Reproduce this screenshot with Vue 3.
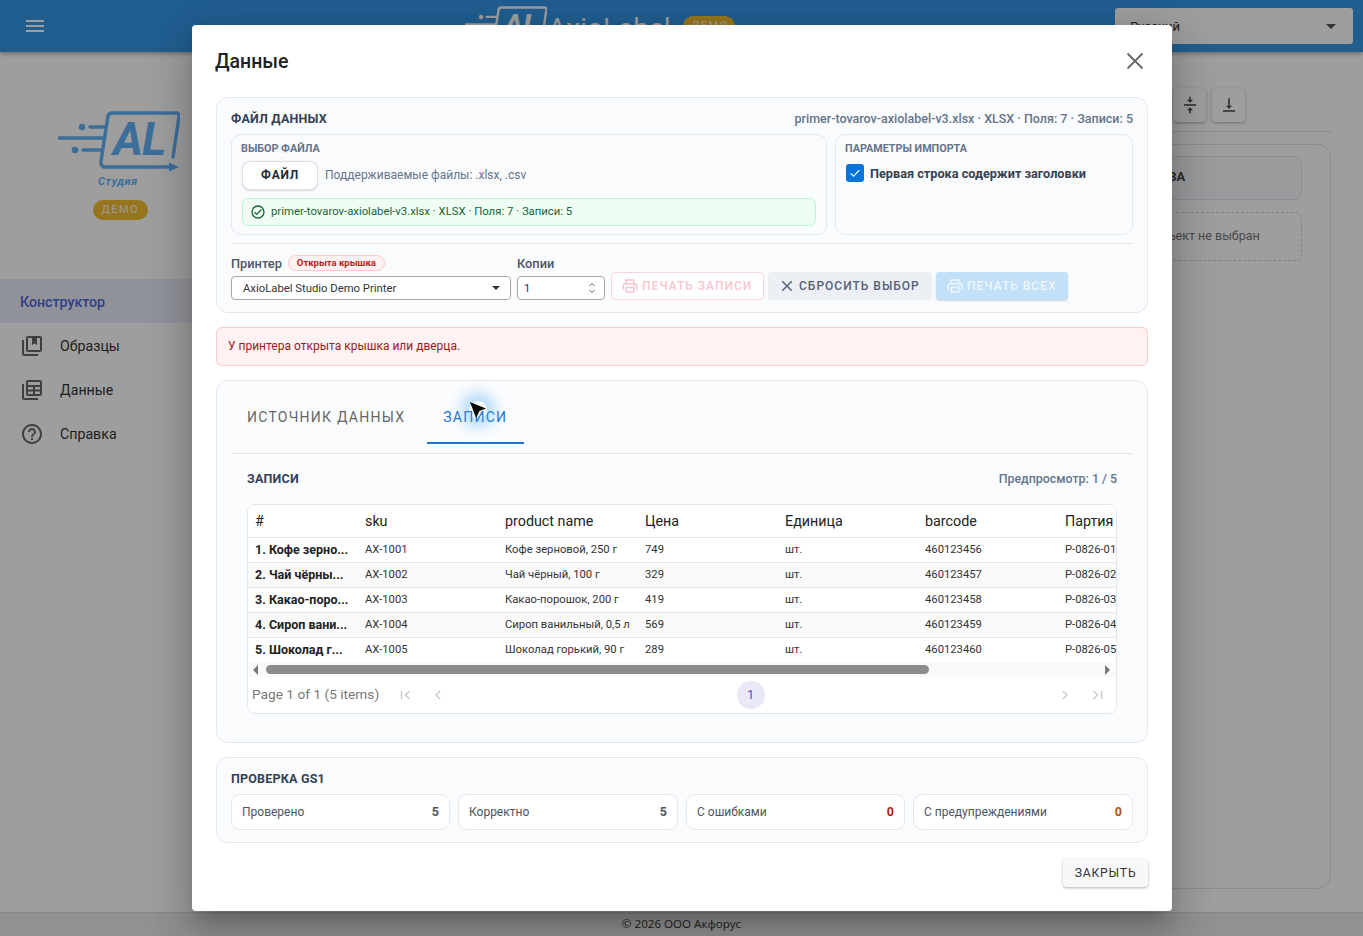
<template>
  <div class="app-shell">
    <!-- 顶栏 -->
    <header class="top-bar">
      <button class="menu-btn" aria-label="Меню">
        <svg width="24" height="24" viewBox="0 0 24 24"><path d="M3 6h18v2H3zm0 5h18v2H3zm0 5h18v2H3z" fill="#fff" /></svg>
      </button>
      <div class="top-logo">
        <svg class="top-logo-mark" width="82" height="50" viewBox="0 0 122 62">
          <use href="#al-mark" />
          <text x="57" y="45" class="brand-al">AL</text>
        </svg>
        <span class="top-logo-name">AxioLabel</span>
        <span class="demo-badge top-badge">ДЕМО</span>
      </div>
      <div class="lang-select">
        <span>Русский</span>
        <i class="caret"></i>
      </div>
    </header>

    <div class="page-body">
      <!-- 侧边栏 -->
      <aside class="side-nav">
        <div class="brand">
          <svg class="brand-mark" width="122" height="62" viewBox="0 0 122 62">
            <defs>
              <g id="al-mark" fill="none" stroke="currentColor" stroke-width="3.400" stroke-linecap="round">
                <path d="M45 56 H 113" stroke-linecap="butt" />
                <path d="M111 51.500 L121 56 L111 60.500 Z" fill="currentColor" stroke="none" />
                <path d="M50 5 Q51 2 54 2 H118 Q121.500 2 121 5.500 L115 46" />
                <path d="M50 5 L43 50 Q42.500 55 46 56" />
                <path d="M32 16 H47 M1 27 H45 M25 39 H44" />
                <circle cx="24" cy="16" r="1.600" fill="currentColor" />
                <circle cx="17" cy="39" r="1.600" fill="currentColor" />
              </g>
            </defs>
            <use href="#al-mark" />
            <text x="55" y="44" class="brand-al">AL</text>
          </svg>
          <div class="brand-sub">Студия</div>
          <span class="demo-badge">ДЕМО</span>
        </div>
        <nav class="nav-list">
          <a class="nav-item active"><span>Конструктор</span></a>
          <a v-for="item in navItems" :key="item.label" class="nav-item">
            <svg width="24" height="24" viewBox="0 0 24 24"><path :d="item.icon" fill="#666" fill-rule="evenodd" /></svg>
            <span>{{ item.label }}</span>
          </a>
        </nav>
      </aside>

      <!-- 主区域 -->
      <main class="workspace">
        <div class="tool-row">
          <button class="tool-btn">
            <svg width="18" height="18" viewBox="0 0 24 24"><path d="M8 19h3v4h2v-4h3l-4-4-4 4zm8-14h-3V1h-2v4H8l4 4 4-4zM4 11v2h16v-2H4z" fill="#444" /></svg>
          </button>
          <button class="tool-btn">
            <svg width="18" height="18" viewBox="0 0 24 24"><path d="M16 13h-3V3h-2v10H8l4 4 4-4zM4 19v2h16v-2H4z" fill="#444" /></svg>
          </button>
        </div>
        <div class="work-card">
          <div class="prop-col">
            <div class="prop-head">СВОЙСТВА</div>
            <div class="prop-empty">Объект не выбран</div>
          </div>
        </div>
      </main>
    </div>

    <footer class="page-foot">© 2026 ООО Акфорус</footer>

    <!-- 弹窗遮罩 -->
    <div class="scrim"></div>

    <div class="dialog">
      <div class="dialog-head">
        <h2>Данные</h2>
        <svg width="24" height="24" viewBox="0 0 24 24"><path d="M4.500 4.500 19.500 19.500M19.500 4.500 4.500 19.500" fill="none" stroke="#666" stroke-width="1.800" /></svg>
      </div>

      <div class="dialog-body">
        <!-- 文件区域 -->
        <section class="panel file-panel">
          <div class="panel-row">
            <h3 class="panel-title">ФАЙЛ ДАННЫХ</h3>
            <span class="file-meta">{{ fileSummary }}</span>
          </div>
          <div class="file-grid">
            <div class="sub-card">
              <h4>ВЫБОР ФАЙЛА</h4>
              <div class="file-pick">
                <button class="file-btn">ФАЙЛ</button>
                <span class="file-hint">Поддерживаемые файлы: .xlsx, .csv</span>
              </div>
              <div class="file-ok">
                <svg width="16" height="16" viewBox="0 0 24 24"><path d="M12 2a10 10 0 1 0 0 20 10 10 0 0 0 0-20zm0 18a8 8 0 1 1 0-16 8 8 0 0 1 0 16zm4.590-12.420L10 14.170l-2.590-2.580L6 13l4 4 8-8z" fill="#166534" /></svg>
                <span>{{ fileSummary }}</span>
              </div>
            </div>
            <div class="sub-card">
              <h4>ПАРАМЕТРЫ ИМПОРТА</h4>
              <label class="check-row">
                <span class="check-box">
                  <svg width="14" height="14" viewBox="0 0 24 24"><path d="M4.500 12.500 9.500 17.500 19.500 7" fill="none" stroke="#fff" stroke-width="2" /></svg>
                </span>
                Первая строка содержит заголовки
              </label>
            </div>
          </div>
          <div class="print-row">
            <div class="field printer-field">
              <div class="field-label">
                <span>Принтер</span>
                <span class="lid-chip">Открыта крышка</span>
              </div>
              <div class="input-box">
                <span>AxioLabel Studio Demo Printer</span>
                <i class="caret small"></i>
              </div>
            </div>
            <div class="field copies-field">
              <div class="field-label"><span>Копии</span></div>
              <div class="input-box">
                <span>1</span>
                <svg width="8" height="14" viewBox="0 0 8 14"><path d="M1.500 5 4 2.500 6.500 5M1.500 9 4 11.500 6.500 9" fill="none" stroke="#666" /></svg>
              </div>
            </div>
            <button class="act-btn act-record">
              <svg width="18" height="18" viewBox="0 0 24 24"><path :d="printerIcon" fill="currentColor" /></svg>
              ПЕЧАТЬ ЗАПИСИ
            </button>
            <button class="act-btn act-reset">
              <svg width="18" height="18" viewBox="0 0 24 24"><path d="M19 6.410 17.590 5 12 10.590 6.410 5 5 6.410 10.590 12 5 17.590 6.410 19 12 13.410 17.590 19 19 17.590 13.410 12z" fill="currentColor" /></svg>
              СБРОСИТЬ ВЫБОР
            </button>
            <button class="act-btn act-all">
              <svg width="18" height="18" viewBox="0 0 24 24"><path :d="printerIcon" fill="currentColor" /></svg>
              ПЕЧАТЬ ВСЕХ
            </button>
          </div>
        </section>

        <div class="alert">У принтера открыта крышка или дверца.</div>

        <!-- 标签页和记录表 -->
        <section class="panel tabs-panel">
          <div class="tabs">
            <div class="tab">ИСТОЧНИК ДАННЫХ</div>
            <div class="tab current">ЗАПИСИ</div>
          </div>
          <div class="records">
            <div class="records-head">
              <h3 class="panel-title">ЗАПИСИ</h3>
              <span class="preview-count">Предпросмотр: 1 / 5</span>
            </div>
            <div class="table-card">
              <div class="table-clip">
                <div class="t-row t-head">
                  <div v-for="col in columns" :key="col" class="t-cell">{{ col }}</div>
                </div>
                <div v-for="row in rows" :key="row.sku" class="t-row">
                  <div class="t-cell first">{{ row.title }}</div>
                  <div class="t-cell">{{ row.sku }}</div>
                  <div class="t-cell">{{ row.name }}</div>
                  <div class="t-cell">{{ row.price }}</div>
                  <div class="t-cell">шт.</div>
                  <div class="t-cell">{{ row.barcode }}</div>
                  <div class="t-cell">{{ row.lot }}</div>
                </div>
              </div>
              <div class="h-scroll">
                <i class="arrow-l"></i>
                <div class="h-track"><div class="h-thumb"></div></div>
                <i class="arrow-r"></i>
              </div>
              <div class="pager">
                <span class="pager-info">Page 1 of 1 (5 items)</span>
                <svg class="pg-first" width="16" height="16" viewBox="0 0 16 16"><path d="M3.500 4v8M11.500 4l-4 4 4 4" fill="none" stroke="#c4c7cc" stroke-width="1.300" /></svg>
                <svg class="pg-prev" width="16" height="16" viewBox="0 0 16 16"><path d="M10 4 6 8l4 4" fill="none" stroke="#c4c7cc" stroke-width="1.300" /></svg>
                <span class="pg-num">1</span>
                <svg class="pg-next" width="16" height="16" viewBox="0 0 16 16"><path d="m6 4 4 4-4 4" fill="none" stroke="#c4c7cc" stroke-width="1.300" /></svg>
                <svg class="pg-last" width="16" height="16" viewBox="0 0 16 16"><path d="M12.500 4v8M4.500 4l4 4-4 4" fill="none" stroke="#c4c7cc" stroke-width="1.300" /></svg>
              </div>
            </div>
          </div>
        </section>

        <!-- GS1 检查 -->
        <section class="panel gs1-panel">
          <h3 class="panel-title">ПРОВЕРКА GS1</h3>
          <div class="stat-grid">
            <div v-for="stat in stats" :key="stat.label" class="stat">
              <span>{{ stat.label }}</span>
              <b :class="stat.tone">{{ stat.value }}</b>
            </div>
          </div>
        </section>
      </div>

      <div class="dialog-foot">
        <button class="close-btn">ЗАКРЫТЬ</button>
      </div>

      <!-- 鼠标指针 -->
      <div class="cursor">
        <svg width="18" height="18" viewBox="0 0 18 18"><path d="M1 1 17 7.500 10.500 10 7 17z" fill="#0b0b0b" /></svg>
      </div>
    </div>
  </div>
</template>

<script setup>
const fileSummary = 'primer-tovarov-axiolabel-v3.xlsx · XLSX · Поля: 7 · Записи: 5'

const printerIcon = 'M19 8h-1V3H6v5H5c-1.660 0-3 1.340-3 3v6h4v4h12v-4h4v-6c0-1.660-1.340-3-3-3zM8 5h8v3H8V5zm8 14H8v-4h8v4zm2-2v-4H6v4H4v-6c0-.550.450-1 1-1h14c.550 0 1 .450 1 1v6h-2zm0-6.500a1 1 0 1 0 0 2 1 1 0 0 0 0-2z'

const navItems = [
  { label: 'Образцы', icon: 'M4 6H2v14c0 1.100.900 2 2 2h14v-2H4V6zm16-4H8c-1.100 0-2 .900-2 2v12c0 1.100.900 2 2 2h12c1.100 0 2-.900 2-2V4c0-1.100-.900-2-2-2zm0 14H8V4h4v7l2.500-1.500L17 11V4h3v12z' },
  { label: 'Данные', icon: 'M4 6H2v14c0 1.100.900 2 2 2h14v-2H4V6zM20 2H8c-1.100 0-2 .900-2 2v12c0 1.100.900 2 2 2h12c1.100 0 2-.900 2-2V4c0-1.100-.900-2-2-2zM8 4h12v3H8V4zm0 5h5v2.500H8V9zm7 0h5v2.500h-5V9zm-7 4.500h5V16H8v-2.500zm7 0h5V16h-5v-2.500z' },
  { label: 'Справка', icon: 'M11 18h2v-2h-2v2zm1-16C6.480 2 2 6.480 2 12s4.480 10 10 10 10-4.480 10-10S17.520 2 12 2zm0 18c-4.410 0-8-3.590-8-8s3.590-8 8-8 8 3.590 8 8-3.590 8-8 8zm0-14c-2.210 0-4 1.790-4 4h2c0-1.100.900-2 2-2s2 .900 2 2c0 2-3 1.750-3 5h2c0-2.250 3-2.500 3-5 0-2.210-1.790-4-4-4z' }
]

const columns = ['#', 'sku', 'product name', 'Цена', 'Единица', 'barcode', 'Партия']

const rows = [
  { title: '1. Кофе зерно...', sku: 'AX-1001', name: 'Кофе зерновой, 250 г', price: 749, barcode: '460123456', lot: 'P-0826-01' },
  { title: '2. Чай чёрны...', sku: 'AX-1002', name: 'Чай чёрный, 100 г', price: 329, barcode: '460123457', lot: 'P-0826-02' },
  { title: '3. Какао-поро...', sku: 'AX-1003', name: 'Какао-порошок, 200 г', price: 419, barcode: '460123458', lot: 'P-0826-03' },
  { title: '4. Сироп вани...', sku: 'AX-1004', name: 'Сироп ванильный, 0,5 л', price: 569, barcode: '460123459', lot: 'P-0826-04' },
  { title: '5. Шоколад г...', sku: 'AX-1005', name: 'Шоколад горький, 90 г', price: 289, barcode: '460123460', lot: 'P-0826-05' }
]

const stats = [
  { label: 'Проверено', value: 5, tone: '' },
  { label: 'Корректно', value: 5, tone: '' },
  { label: 'С ошибками', value: 0, tone: 'bad' },
  { label: 'С предупреждениями', value: 0, tone: 'warn' }
]
</script>

<style>
html, body {
  margin: 0;
  height: 100%;
  overflow: hidden;
  background: #fff;
}
</style>

<style scoped>
* {
  box-sizing: border-box;
}

.app-shell {
  position: relative;
  width: 1363px;
  height: 936px;
  overflow: hidden;
  display: flex;
  flex-direction: column;
  font-family: Roboto, "Noto Sans", sans-serif;
  color: #1f2937;
}

.top-bar {
  height: 52px;
  flex: none;
  background: #3598e8;
  box-shadow: 0 2px 4px rgba(0, 0, 0, 0.3);
  display: flex;
  align-items: center;
  padding: 0 10px 0 23px;
  position: relative;
  z-index: 1;
}

.menu-btn {
  padding: 0;
  border: 0;
  background: none;
  height: 24px;
}

.top-logo {
  margin-left: 418px;
  display: flex;
  align-items: center;
  width: 270px;
  height: 50px;
}

.top-logo-mark {
  flex: none;
  color: #fff;
  margin-top: 2px;
}

.top-logo-mark .brand-al {
  fill: #fff;
}

.top-logo-name {
  margin: 4px 0 0 1px;
  font-size: 28px;
  color: #fff;
}

.demo-badge {
  display: inline-block;
  background: #f3bd2f;
  color: #f7efd8;
  font-size: 11px;
  font-weight: 500;
  letter-spacing: 1.500px;
  line-height: 18px;
  height: 20px;
  padding: 1px 8.500px;
  border-radius: 10px;
}

.top-badge {
  margin-left: 12px;
  width: 52px;
  flex: none;
}

.lang-select {
  margin-left: auto;
  width: 238px;
  height: 36px;
  background: #fff;
  border-radius: 3px;
  display: flex;
  align-items: center;
  justify-content: space-between;
  padding: 0 17px 0 15px;
  font-size: 13px;
  color: #333;
}

.caret {
  width: 0;
  height: 0;
  border-left: 5px solid transparent;
  border-right: 5px solid transparent;
  border-top: 5px solid #555;
}

.caret.small {
  border-left-width: 4px;
  border-right-width: 4px;
  border-top-width: 4px;
  border-top-color: #333;
}

.page-body {
  flex: 1;
  display: flex;
  min-height: 0;
  background: #fff;
}

.side-nav {
  width: 238px;
  flex: none;
}

.brand {
  height: 227px;
  display: flex;
  flex-direction: column;
  align-items: flex-start;
  padding: 59px 0 0 58px;
}

.brand-mark {
  color: #61b2f8;
  flex: none;
}

.brand-al {
  font-family: Roboto, sans-serif;
  font-size: 46px;
  font-weight: 700;
  font-style: italic;
  letter-spacing: -1px;
  fill: #61b2f8;
}

.brand-sub {
  margin: 2px 0 0 40px;
  font-size: 11px;
  font-weight: 700;
  font-style: italic;
  letter-spacing: 0.600px;
  color: #61b2f8;
}

.brand .demo-badge {
  margin: 12px 0 0 35px;
}

.nav-item {
  display: flex;
  align-items: center;
  gap: 16px;
  height: 44px;
  padding: 2px 0 0 20px;
  font-size: 14.200px;
  color: #333;
}

.nav-item.active {
  background: #ebedf9;
  color: #5068d8;
  font-weight: 500;
}

.workspace {
  flex: 1;
  min-width: 0;
  padding: 36px 32px 23px 0;
  display: flex;
  flex-direction: column;
}

.tool-row {
  height: 44px;
  flex: none;
  display: flex;
  justify-content: flex-end;
  gap: 6px;
  padding: 0 86px 10px 0;
  border-bottom: 1px solid #e2e2e2;
}

.tool-btn {
  width: 33px;
  height: 34px;
  padding: 0;
  border: 0;
  border-radius: 4px;
  background: #fff;
  box-shadow: 0 1px 3px rgba(0, 0, 0, 0.3);
  display: flex;
  align-items: center;
  justify-content: center;
}

.work-card {
  flex: 1;
  margin-top: 12px;
  border: 1px solid #e2e2e2;
  border-radius: 14px;
  padding: 11px 28px 0 12px;
}

.prop-col {
  width: 192px;
  margin-left: auto;
}

.prop-head {
  height: 44px;
  line-height: 40px;
  border: 1px solid #dfe5ec;
  border-radius: 8px;
  background: #f8fbfe;
  padding-left: 6px;
  font-size: 13px;
  font-weight: 700;
  color: #444;
}

.prop-empty {
  margin-top: 12px;
  height: 49px;
  line-height: 45px;
  border: 1px dashed #cfd4da;
  border-radius: 6px;
  text-align: center;
  font-size: 12.500px;
  color: #777;
}

.page-foot {
  height: 24px;
  flex: none;
  border-top: 1px solid #dcdcdc;
  background: #eaeaea;
  text-align: center;
  font-family: "Open Sans", Roboto, sans-serif;
  font-size: 11.600px;
  line-height: 21px;
  color: #333;
}

.scrim {
  position: absolute;
  inset: 0;
  z-index: 5;
  background: rgba(0, 0, 0, 0.38);
}

.dialog {
  position: absolute;
  z-index: 6;
  left: 192px;
  top: 25px;
  width: 980px;
  height: 886px;
  background: #fff;
  border-radius: 4px;
  box-shadow: 0 11px 15px -7px rgba(0, 0, 0, 0.2), 0 24px 38px 3px rgba(0, 0, 0, 0.14), 0 9px 46px 8px rgba(0, 0, 0, 0.12);
  display: flex;
  flex-direction: column;
}

.dialog-head {
  height: 72px;
  flex: none;
  display: flex;
  align-items: center;
  justify-content: space-between;
  padding: 0 25px 0 23px;
}

.dialog-head h2 {
  margin: 0;
  font-size: 19.500px;
  font-weight: 500;
  color: #222;
}

.dialog-body {
  flex: 1;
  padding: 0 24px;
  display: flex;
  flex-direction: column;
  gap: 14px;
}

.panel {
  border: 1px solid #e2e8f0;
  border-radius: 12px;
  background: #fafbfd;
}

.panel-title {
  margin: 0;
  font-size: 12.500px;
  font-weight: 700;
  letter-spacing: 0.200px;
  color: #334155;
}

.file-panel {
  height: 216px;
  padding: 12px 14px 0;
}

.panel-row {
  display: flex;
  justify-content: space-between;
  align-items: center;
  height: 16px;
}

.file-meta {
  font-size: 12.500px;
  font-weight: 500;
  color: #64748b;
}

.file-grid {
  margin-top: 8px;
  display: grid;
  grid-template-columns: 596px 298px;
  gap: 8px;
  height: 101px;
}

.sub-card {
  border: 1px solid #e2e8f0;
  border-radius: 10px;
  background: #fafbfd;
  padding: 8px 10px 8px 9px;
}

.sub-card h4 {
  margin: 0;
  font-size: 10.800px;
  line-height: 12px;
  font-weight: 700;
  color: #64748b;
}

.file-pick {
  margin: 6px 0 0 1px;
  display: flex;
  align-items: center;
  gap: 7px;
}

.file-btn {
  width: 76px;
  height: 29px;
  padding: 0 0 1px;
  border: 1px solid #d9dfe8;
  border-radius: 8px;
  background: #fff;
  box-shadow: 0 1px 2px rgba(0, 0, 0, 0.12);
  font-family: inherit;
  font-size: 12px;
  font-weight: 700;
  letter-spacing: 0.800px;
  color: #1f2937;
}

.file-hint {
  margin-bottom: 2px;
  font-size: 12px;
  color: #64748b;
}

.file-ok {
  margin: 8px 0 0 1px;
  height: 28px;
  padding: 0 0 2px 7px;
  border: 1px solid #bbf7d0;
  border-radius: 6px;
  background: #f0fdf4;
  display: flex;
  align-items: center;
  gap: 5px;
  font-size: 11.340px;
  color: #166534;
}

.file-ok svg {
  margin-top: 2px;
}

.check-row {
  margin: 9px 0 0 1px;
  display: flex;
  align-items: center;
  gap: 6px;
  font-size: 12.700px;
  font-weight: 700;
  color: #374151;
}

.check-box {
  width: 18px;
  height: 18px;
  border-radius: 3px;
  background: #0a74da;
  display: flex;
  align-items: center;
  justify-content: center;
}

.print-row {
  margin-top: 8px;
  padding-top: 11px;
  border-top: 1px solid #e5e7eb;
  display: flex;
  align-items: flex-end;
  gap: 4px;
}

.field-label {
  display: flex;
  align-items: center;
  gap: 6px;
  height: 16px;
  font-size: 12.800px;
  font-weight: 500;
  color: #4b5563;
}

.lid-chip {
  height: 16px;
  line-height: 14px;
  padding: 0 8px;
  border: 1px solid #fecaca;
  border-radius: 8px;
  background: #fef2f2;
  font-size: 9.500px;
  font-weight: 700;
  color: #b91c1c;
}

.input-box {
  margin-top: 5px;
  height: 24px;
  border: 1px solid #a8a8a8;
  border-radius: 4px;
  background: #fff;
  display: flex;
  align-items: center;
  justify-content: space-between;
  padding: 0 10px 0 11px;
  font-size: 11.300px;
  color: #333;
}

.printer-field {
  width: 280px;
  margin-right: 2px;
}

.copies-field {
  width: 88px;
  margin-right: 2px;
}

.copies-field .input-box {
  padding: 0 8px 0 6px;
}

.act-btn {
  height: 28px;
  padding: 0 0 0 10px;
  border-radius: 4px;
  font-family: inherit;
  font-size: 12px;
  font-weight: 500;
  letter-spacing: 1px;
  display: flex;
  align-items: center;
  gap: 3px;
  white-space: nowrap;
}

.act-record {
  width: 153px;
  padding-left: 9px;
  border: 1px solid #fbd5dc;
  background: #fff;
  color: #f9c6d0;
}

.act-reset {
  width: 164px;
  border: 0;
  background: #eceff4;
  color: #56627a;
}

.act-all {
  width: 132px;
  border: 0;
  background: #c2e0f7;
  color: #edf6fd;
  box-shadow: 0 1px 2px rgba(0, 0, 0, 0.15);
}

.alert {
  height: 39px;
  line-height: 37px;
  flex: none;
  border: 1px solid #fecaca;
  border-radius: 6px;
  background: #fef2f2;
  padding-left: 11px;
  font-size: 12px;
  color: #991b1b;
}

.tabs-panel {
  height: 363px;
  flex: none;
  padding: 0 14px;
  background: #fbfcfe;
}

.tabs {
  height: 73px;
  border-bottom: 1px solid #e5e7eb;
  display: flex;
  padding-top: 13px;
}

.tab {
  height: 50px;
  padding: 0 16px;
  line-height: 46px;
  font-size: 14px;
  letter-spacing: 1.250px;
  color: #666;
}

.tab + .tab {
  margin-left: 6px;
}

.tab.current {
  padding-right: 17px;
  color: #1976d2;
  border-bottom: 2px solid #1976d2;
}

.records {
  padding: 0 16px;
}

.records-head {
  height: 50px;
  padding-bottom: 2px;
  display: flex;
  justify-content: space-between;
  align-items: center;
}

.preview-count {
  font-size: 12.400px;
  font-weight: 500;
  color: #64748b;
}

.table-card {
  height: 210px;
  border: 1px solid #e2e8f0;
  border-radius: 8px;
  background: #fff;
  overflow: hidden;
}

.table-clip {
  overflow: hidden;
}

.t-row {
  display: grid;
  grid-template-columns: 110px repeat(6, 140px);
  height: 25px;
  padding-bottom: 2px;
  border-top: 1px solid #e5e7eb;
  align-items: center;
  font-size: 11.250px;
  color: #333;
}

.t-row:nth-child(odd) {
  background: #fafafa;
}

.t-cell {
  padding-left: 7px;
  white-space: nowrap;
}

.t-head,
.t-head:nth-child(odd) {
  height: 32px;
  padding-bottom: 0;
  border-top: 0;
  background: #fff;
  font-size: 14.300px;
  font-weight: 400;
  color: #222;
}

.first {
  font-size: 12.500px;
  font-weight: 700;
  color: #222;
}

.h-scroll {
  height: 15px;
  background: #fafafa;
  display: flex;
  align-items: center;
  padding: 0 6px 0 5px;
}

.h-track {
  flex: 1;
  margin: 0 8px;
}

.h-thumb {
  width: 663px;
  height: 9px;
  border-radius: 5px;
  background: #8c8c8c;
}

.arrow-l,
.arrow-r {
  width: 0;
  height: 0;
  border-top: 5px solid transparent;
  border-bottom: 5px solid transparent;
}

.arrow-l {
  border-right: 5px solid #777;
}

.arrow-r {
  border-left: 5px solid #777;
}

.pager {
  height: 36px;
  display: flex;
  align-items: center;
  padding: 0 11px 0 4px;
  font-size: 13.700px;
  color: #777;
}

.pager-info {
  width: 146px;
  margin-bottom: 2px;
}

.pg-prev {
  margin-left: 16px;
}

.pg-num {
  margin: 0 auto;
  width: 28px;
  height: 28px;
  border-radius: 50%;
  background: #e8e8f8;
  color: #4f46b5;
  font-size: 12px;
  text-align: center;
  line-height: 28px;
  transform: translateX(-1px);
}

.pg-last {
  margin-left: 16px;
}

.gs1-panel {
  height: 86px;
  flex: none;
  padding: 14px 14px 0;
}

.gs1-panel .panel-title {
  line-height: 14px;
}

.stat-grid {
  margin-top: 8px;
  display: grid;
  grid-template-columns: 219px 220px 219px 220px;
  gap: 8px;
}

.stat {
  height: 36px;
  padding: 0 10px 1px;
  border: 1px solid #e2e8f0;
  border-radius: 9px;
  background: #fff;
  display: flex;
  align-items: center;
  justify-content: space-between;
  font-size: 12px;
  color: #4b5563;
}

.stat b {
  font-size: 12.500px;
}

.stat .bad {
  color: #b91c1c;
}

.stat .warn {
  color: #b45309;
}

.dialog-foot {
  height: 52px;
  flex: none;
  display: flex;
  justify-content: flex-end;
  padding: 0 24px;
}

.close-btn {
  height: 28px;
  width: 85px;
  padding: 0;
  border: 0;
  border-radius: 4px;
  background: #f7f8fa;
  box-shadow: 0 1px 3px rgba(0, 0, 0, 0.3);
  font-family: inherit;
  font-size: 12.200px;
  font-weight: 400;
  letter-spacing: 0.800px;
  color: #333;
}

.cursor {
  position: absolute;
  left: 277px;
  top: 376px;
  width: 18px;
  height: 18px;
  border-radius: 50%;
  box-shadow: 0 0 14px 8px rgba(66, 165, 245, 0.4);
}

.cursor svg {
  display: block;
}
</style>
